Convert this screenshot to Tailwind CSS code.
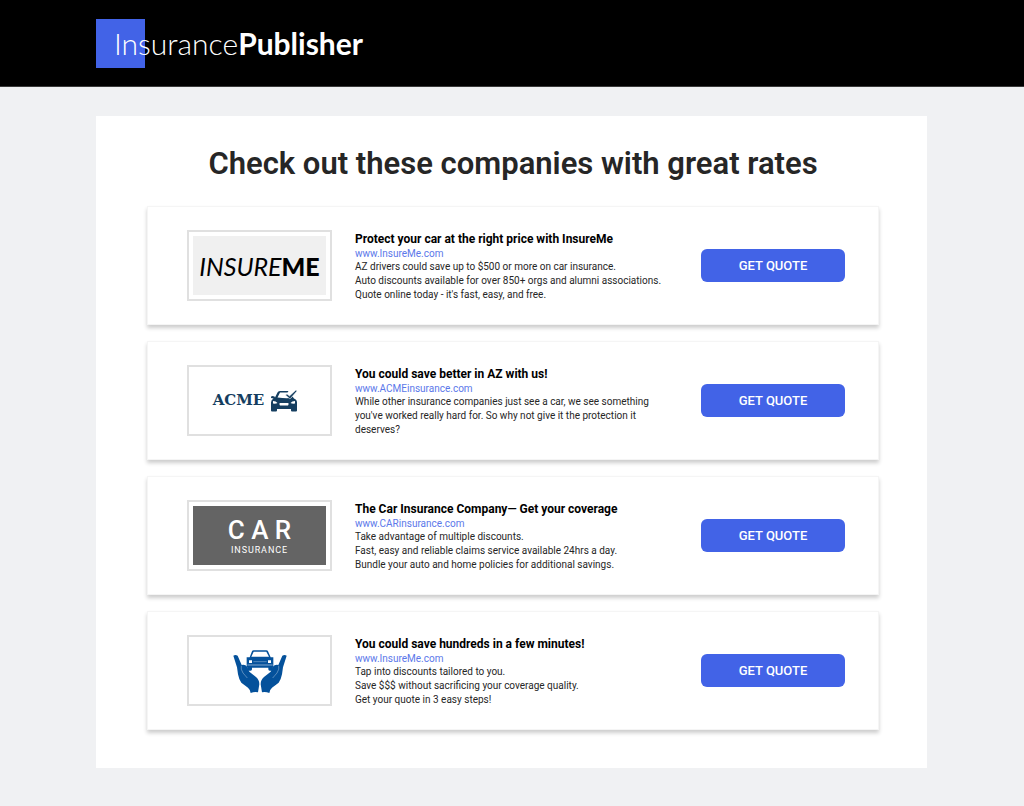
<!DOCTYPE html>
<html lang="en">
<head>
  <meta charset="UTF-8" />
  <meta name="viewport" content="width=device-width, initial-scale=1.0" />
  <title>InsurancePublisher</title>
  <script src="https://cdn.jsdelivr.net/npm/@tailwindcss/browser@4"></script>
</head>
<body class="min-h-screen bg-[#f0f1f3] font-['Roboto',sans-serif] text-[#262626]">

  <header class="bg-black border-b border-[#3a3a3a] px-24 pt-[19px] pb-[18px]">
    <a href="#" class="flex items-center w-fit h-[49px] text-[30px] text-white whitespace-nowrap font-['Lato',sans-serif] bg-[linear-gradient(#4263e7,#4263e7)] bg-[size:49px_49px] bg-no-repeat pl-[18px]">
      <span class="font-light">Insurance</span><span class="font-bold">Publisher</span>
    </a>
  </header>

  <main class="ml-24 mr-[97px] mt-[29px] mb-[38px] bg-white pl-[51px] pr-12 pt-7 pb-[38px]">
    <h1 class="text-center text-[31px] leading-[40px] font-semibold">Check out these companies with great rates</h1>

    <div class="mt-[22px] flex flex-col gap-4">

      <section class="flex items-center border border-[#f5f5f5] shadow-[0_3px_4px_rgba(0,0,0,0.2)] pl-[39px] pr-[33px] h-[119px]">
        <div class="w-[145px] h-[71px] shrink-0 border-2 border-[#e0e0e0] p-1">
          <div class="h-full bg-[#f0f0f0] flex items-center justify-center text-[25px] leading-[30px] text-black font-['Lato',sans-serif]">
            <span class="italic">INSURE</span><span class="font-black">ME</span>
          </div>
        </div>
        <div class="ml-[23px] flex-1 pt-0.5 text-[10px] leading-[14px]">
          <h2 class="text-[12px] leading-[15px] font-bold text-black">Protect your car at the right price with InsureMe</h2>
          <a href="#" class="block leading-[13px] text-[#5b78ea]">www.InsureMe.com</a>
          <p>AZ drivers could save up to $500 or more on car insurance.<br />Auto discounts available for over 850+ orgs and alumni associations.<br />Quote online today - it's fast, easy, and free.</p>
        </div>
        <button type="button" class="w-36 h-[33px] shrink-0 rounded-md bg-[#4263e7] text-[13px] font-medium text-white">GET QUOTE</button>
      </section>

      <section class="flex items-center border border-[#f5f5f5] shadow-[0_3px_4px_rgba(0,0,0,0.2)] pl-[39px] pr-[33px] h-[119px]">
        <div class="w-[145px] h-[71px] shrink-0 border-2 border-[#e0e0e0] flex items-center justify-center gap-1.5 pr-2 text-[#153e60]">
          <span class="text-[15px] font-bold font-['DejaVu_Serif',serif]">ACME</span>
          <svg class="w-7 h-[22px]" viewBox="0 0 56 44" fill="currentColor">
            <path d="M10 15 L15 5 Q16 2 20 2 H37 L35 5 H20 L15 15 Q30 17 42 16 L45 13 L48 17 Q54 19 54 25 V41 Q54 43 52 43 H44 Q42 43 42 41 V38 H14 V41 Q14 43 12 43 H4 Q2 43 2 41 V25 Q2 20 7 17 L2 16 Q1 12 5 12 L9 13Z" />
            <path d="M31 10 L34 8 L39 12 L52 0 L54 2 L40 18Z" stroke="#fff" stroke-width="1" />
            <path d="M6 22 Q12 22 15 26 Q11 28 6 27Z M50 22 Q44 22 41 26 Q45 28 50 27Z M20 26 H36 Q38 26 37 29 L36 31 H20 L19 29 Q18 26 20 26Z" fill="#fff" />
          </svg>
        </div>
        <div class="ml-[23px] flex-1 pt-0.5 text-[10px] leading-[14px]">
          <h2 class="text-[12px] leading-[15px] font-bold text-black">You could save better in AZ with us!</h2>
          <a href="#" class="block leading-[13px] text-[#5b78ea]">www.ACMEinsurance.com</a>
          <p>While other insurance companies just see a car, we see something<br />you've worked really hard for. So why not give it the protection it<br />deserves?</p>
        </div>
        <button type="button" class="w-36 h-[33px] shrink-0 rounded-md bg-[#4263e7] text-[13px] font-medium text-white">GET QUOTE</button>
      </section>

      <section class="flex items-center border border-[#f5f5f5] shadow-[0_3px_4px_rgba(0,0,0,0.2)] pl-[39px] pr-[33px] h-[119px]">
        <div class="w-[145px] h-[71px] shrink-0 border-2 border-[#e0e0e0] p-1">
          <div class="h-full bg-[#646464] flex flex-col items-center justify-center text-white">
            <span class="text-[26px] leading-[30px] font-medium">C A R</span>
            <span class="text-[9px] leading-[11px] tracking-widest">INSURANCE</span>
          </div>
        </div>
        <div class="ml-[23px] flex-1 pt-0.5 text-[10px] leading-[14px]">
          <h2 class="text-[12px] leading-[15px] font-bold text-black">The Car Insurance Company— Get your coverage</h2>
          <a href="#" class="block leading-[13px] text-[#5b78ea]">www.CARinsurance.com</a>
          <p>Take advantage of multiple discounts.<br />Fast, easy and reliable claims service available 24hrs a day.<br />Bundle your auto and home policies for additional savings.</p>
        </div>
        <button type="button" class="w-36 h-[33px] shrink-0 rounded-md bg-[#4263e7] text-[13px] font-medium text-white">GET QUOTE</button>
      </section>

      <section class="flex items-center border border-[#f5f5f5] shadow-[0_3px_4px_rgba(0,0,0,0.2)] pl-[39px] pr-[33px] h-[119px]">
        <div class="w-[145px] h-[71px] shrink-0 border-2 border-[#e0e0e0] flex items-center justify-center text-[#04519b]">
          <svg class="w-[54px] h-11" viewBox="0 0 162 132" fill="currentColor">
            <!-- car -->
            <path d="M50 25 L57 7 Q58 4 62 4 H100 Q104 4 105 7 L113 25 H121 V54 Q121 56 119 56 V61 Q119 65 115 65 H110 Q106 65 106 61 V56 H57 V61 Q57 65 53 65 H48 Q44 65 44 61 V56 Q41 56 41 53 V25Z" />
            <path d="M55 23 L62 8 H100 L108 23Z M48 34 H57 V42 H48Z M105 34 H114 V42 H105Z M43 47 H119 V49 H43Z" fill="#fff" />
            <path d="M61 38 H101" stroke="#fff" stroke-width="1" />
            <!-- hands -->
            <path d="M1 20 Q7 16 14 20 L26 48 Q36 45 43 54 L49 68 L69 84 Q79 92 79 106 L75 130 Q65 127 53 132 Q52 122 45 116 L25 101 Q18 92 15 76 L12 55 Z" />
            <path d="M25 50 Q22 60 30 72 Q37 80 43 87" fill="none" stroke="#fff" stroke-width="1" />
            <path d="M161 20 Q155 16 148 20 L136 48 Q126 45 119 54 L113 68 L93 84 Q83 92 83 106 L87 130 Q97 127 109 132 Q110 122 117 116 L137 101 Q144 92 147 76 L150 55 Z" />
            <path d="M137 50 Q140 60 132 72 Q125 80 119 87" fill="none" stroke="#fff" stroke-width="1" />
          </svg>
        </div>
        <div class="ml-[23px] flex-1 pt-0.5 text-[10px] leading-[14px]">
          <h2 class="text-[12px] leading-[15px] font-bold text-black">You could save hundreds in a few minutes!</h2>
          <a href="#" class="block leading-[13px] text-[#5b78ea]">www.InsureMe.com</a>
          <p>Tap into discounts tailored to you.<br />Save $$$ without sacrificing your coverage quality.<br />Get your quote in 3 easy steps!</p>
        </div>
        <button type="button" class="w-36 h-[33px] shrink-0 rounded-md bg-[#4263e7] text-[13px] font-medium text-white">GET QUOTE</button>
      </section>

    </div>
  </main>

</body>
</html>
